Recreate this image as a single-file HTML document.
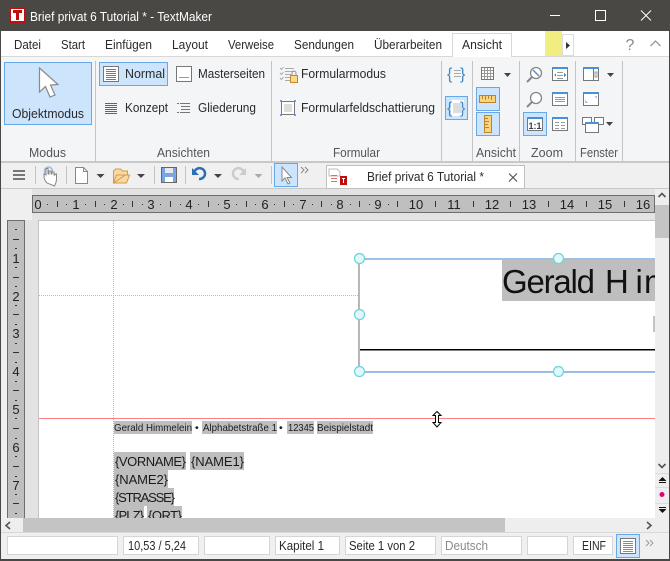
<!DOCTYPE html>
<html><head><meta charset="utf-8"><title>TextMaker</title>
<style>
html,body{margin:0;padding:0;background:#f0f0f0;width:670px;height:561px;overflow:hidden}
svg{display:block}
text{font-family:"Liberation Sans",sans-serif;font-size:13px;fill:#2a2a2a}
.l{fill:#555}
.r{fill:#222;font-size:13px;text-anchor:middle}
.s{fill:#1a1a1a}
</style></head><body>
<svg width="670" height="561" viewBox="0 0 670 561" xmlns="http://www.w3.org/2000/svg" shape-rendering="crispEdges">
<defs><clipPath id="pg"><rect x="39" y="221" width="616" height="297"/></clipPath></defs>
<rect width="670" height="561" fill="#f0f0f0"/>
<!-- title bar -->
<rect width="670" height="31" fill="#4a4845"/>
<rect x="10" y="8" width="15" height="15" fill="#c00d0d"/>
<rect x="11" y="9" width="13" height="12" fill="#fff"/>
<path d="M13 10h9v3h-3v7h-3v-7h-3z" fill="#c00d0d"/>
<text x="30" y="21" style="fill:#fff" textLength="182" lengthAdjust="spacingAndGlyphs">Brief privat 6 Tutorial * - TextMaker</text>
<rect x="550" y="15" width="10" height="1" fill="#fff"/>
<rect x="595.500" y="10.500" width="10" height="10" fill="none" stroke="#fff"/>
<path d="M641 10.500l10 10M651 10.500l-10 10" stroke="#fff" fill="none" shape-rendering="auto"/>
<!-- menu row -->
<rect y="31" width="670" height="25" fill="#fff"/>
<rect y="56" width="670" height="1" fill="#d8d8d8"/>
<g>
<text x="14" y="49" textLength="27" lengthAdjust="spacingAndGlyphs">Datei</text>
<text x="61" y="49" textLength="24" lengthAdjust="spacingAndGlyphs">Start</text>
<text x="105" y="49" textLength="47" lengthAdjust="spacingAndGlyphs">Einfügen</text>
<text x="172" y="49" textLength="36" lengthAdjust="spacingAndGlyphs">Layout</text>
<text x="228" y="49" textLength="46" lengthAdjust="spacingAndGlyphs">Verweise</text>
<text x="294" y="49" textLength="60" lengthAdjust="spacingAndGlyphs">Sendungen</text>
<text x="374" y="49" textLength="68" lengthAdjust="spacingAndGlyphs">Überarbeiten</text>
</g>
<path d="M452.500 57V33.500H511.500V57" fill="#fff" stroke="#d8d8d8"/>
<rect x="453" y="34" width="58" height="23" fill="#fff"/>
<text x="462" y="49" textLength="40" lengthAdjust="spacingAndGlyphs">Ansicht</text>
<rect x="545" y="31" width="17" height="25" fill="#f0ee80"/>
<rect x="562.500" y="34.500" width="11" height="21" fill="#fff" stroke="#ddd"/>
<path d="M566 42l4 3.500-4 3.500z" fill="#333" shape-rendering="auto"/>
<text x="630" y="50" style="fill:#888;font-size:16px" text-anchor="middle">?</text>
<path d="M650.500 46l5-5 5 5" fill="none" stroke="#999" stroke-width="1.300" shape-rendering="auto"/>
<!-- ribbon -->
<rect y="57" width="670" height="104" fill="#f3f5f7"/>
<rect y="161" width="670" height="2" fill="#c8c8c8"/>
<g fill="#c4c4c4">
<rect x="95" y="61" width="1" height="100"/><rect x="271" y="61" width="1" height="100"/>
<rect x="441" y="61" width="1" height="100"/><rect x="472" y="61" width="1" height="100"/>
<rect x="519" y="61" width="1" height="100"/><rect x="575" y="61" width="1" height="100"/>
<rect x="622" y="61" width="1" height="100"/>
</g>
<!-- selected backgrounds -->
<g fill="#cce4fc" stroke="#66a8e8">
<rect x="4.500" y="62.500" width="87" height="62"/>
<rect x="99.500" y="62.500" width="68" height="23"/>
<rect x="445.500" y="96.500" width="22" height="23"/>
<rect x="476.500" y="87.500" width="23" height="23"/>
<rect x="476.500" y="112.500" width="23" height="23"/>
<rect x="523.500" y="112.500" width="23" height="23"/>
</g>
<!-- objektmodus pointer -->
<path d="M39.500 68v24l6-5.500 4.500 10.500 5-2-4.500-10 7.500-.5z" fill="#fff" stroke="#8a8a8a" stroke-width="1.200" shape-rendering="auto"/>
<text x="12" y="118" textLength="72" lengthAdjust="spacingAndGlyphs">Objektmodus</text>
<!-- normal icon -->
<rect x="103.500" y="66.500" width="15" height="15" fill="#fff" stroke="#777"/>
<path d="M106 69.500h10M106 71.500h10M106 73.500h10M106 75.500h10M106 77.500h10M106 79.500h10" stroke="#777"/>
<text x="125" y="78" textLength="40" lengthAdjust="spacingAndGlyphs">Normal</text>
<rect x="176.500" y="66.500" width="15" height="15" fill="#fff" stroke="#777"/>
<rect x="179" y="77" width="10" height="1" fill="#999"/>
<text x="198" y="78" textLength="67" lengthAdjust="spacingAndGlyphs">Masterseiten</text>
<path d="M105 103.500h12M105 105.500h12M105 107.500h12M105 109.500h12M105 111.500h12M105 113.500h12" stroke="#666"/>
<text x="125" y="112" textLength="43" lengthAdjust="spacingAndGlyphs">Konzept</text>
<path d="M177 103.500h13M181 106.500h9M181 109.500h9M177 112.500h13" stroke="#777"/>
<path d="M177 106.500h2M177 109.500h2M179 103.500h1M179 112.500h1" stroke="#f3f5f7"/>
<text x="198" y="112" textLength="58" lengthAdjust="spacingAndGlyphs">Gliederung</text>
<!-- Formular icons -->
<path d="M285 68.500h9M285 71.500h9M285 74.500h6M285 77.500h5M285 80.500h5" stroke="#aaa"/>
<path d="M280 68l1.500 1.500 2-2.500M280 73l1.500 1.500 2-2.500M280 78l1.500 1.500 2-2.500" stroke="#aaa" fill="none" shape-rendering="auto"/>
<rect x="290.500" y="75.500" width="7" height="7" fill="#fbd98a" stroke="#c48a2a"/>
<path d="M292 75v-2a2 2 0 0 1 4 0v2" fill="none" stroke="#a88"  shape-rendering="auto"/>
<text x="301" y="78" textLength="85" lengthAdjust="spacingAndGlyphs">Formularmodus</text>
<rect x="281.500" y="101.500" width="13" height="13" fill="#fff" stroke="#777"/>
<rect x="284" y="104" width="8" height="8" fill="#ddd"/>
<g fill="#6a9be8"><rect x="280" y="100" width="2" height="2"/><rect x="294" y="100" width="2" height="2"/><rect x="280" y="114" width="2" height="2"/><rect x="294" y="114" width="2" height="2"/></g>
<text x="301" y="112" textLength="134" lengthAdjust="spacingAndGlyphs">Formularfeldschattierung</text>
<!-- field brace icons -->
<text x="447" y="79" style="fill:#3c87c8;font-size:16px">{</text>
<text x="460" y="79" style="fill:#3c87c8;font-size:16px">}</text>
<path d="M454 70.500h7M454 73.500h7M454 76.500h7" stroke="#aaa"/>
<rect x="451" y="100" width="13" height="16" fill="#fff"/>
<rect x="453" y="103" width="9" height="10" fill="#ddd"/>
<text x="447" y="113" style="fill:#3c87c8;font-size:16px">{</text>
<text x="460" y="113" style="fill:#3c87c8;font-size:16px">}</text>
<!-- grid -->
<rect x="481.500" y="67.500" width="12" height="12" fill="#fff" stroke="#777"/>
<path d="M484.500 68v11M487.500 68v11M490.500 68v11M482 70.500h11M482 73.500h11M482 76.500h11" stroke="#999"/>
<path d="M504 73h7l-3.500 4z" fill="#444" shape-rendering="auto"/>
<!-- rulers -->
<rect x="479.500" y="95.500" width="16" height="7" fill="#f9d67e" stroke="#b8842e"/>
<path d="M482.500 99v-3M485.500 100v-4M488.500 99v-3M491.500 100v-4" stroke="#b8842e"/>
<rect x="484.500" y="115.500" width="7" height="17" fill="#f9d67e" stroke="#b8842e"/>
<path d="M485 118.500h3M485 121.500h4M485 124.500h3M485 127.500h4" stroke="#b8842e"/>
<!-- zoom magnifiers -->
<g shape-rendering="auto">
<circle cx="536" cy="73" r="5.500" fill="#fff" stroke="#888" stroke-width="1.300"/>
<path d="M532 77l-5 5" stroke="#888" stroke-width="2"/>
<path d="M533 70l6 6" stroke="#5b8fd0" stroke-width="1.500"/>
<circle cx="536" cy="98" r="5.500" fill="#fff" stroke="#888" stroke-width="1.300"/>
<path d="M532 102l-5 5" stroke="#888" stroke-width="2"/>
</g>
<!-- window icons -->
<g fill="#fff" stroke="#777">
<rect x="552.500" y="67.500" width="15" height="13"/>
<rect x="552.500" y="92.500" width="15" height="13"/>
<rect x="527.500" y="117.500" width="15" height="13"/>
<rect x="552.500" y="117.500" width="15" height="13"/>
<rect x="583.500" y="67.500" width="15" height="13"/>
<rect x="583.500" y="92.500" width="15" height="13"/>
</g>
<g fill="#4a90d9">
<rect x="552" y="67" width="16" height="2"/><rect x="552" y="92" width="16" height="2"/>
<rect x="527" y="117" width="16" height="2"/><rect x="552" y="117" width="16" height="2"/>
<rect x="583" y="67" width="16" height="2"/><rect x="583" y="92" width="16" height="2"/>
</g>
<path d="M557 72.500h6M557 75.500h6M557 78.500h6M555 97.500h10M555 99.500h10M555 101.500h10M555 122.500h4M561 122.500h4M555 125.500h4M561 125.500h4M555 128.500h4M561 128.500h4" stroke="#999"/>
<path d="M554 75l2 -2v4zM566 75l-2 -2v4z" fill="#3a8ac8"/>
<text x="535" y="129" text-anchor="middle" style="font-size:9px;font-weight:bold;fill:#345">1:1</text>
<path d="M593.500 69v11" stroke="#777"/><rect x="595" y="72" width="2" height="5" fill="none" stroke="#999"/>
<path d="M585 103v-3l3 3zM597 96v3l-3-3z" fill="#a8c0f0"/>
<path d="M607 73h7l-3.500 4z" fill="#444" shape-rendering="auto"/>
<g fill="#fff" stroke="#777"><rect x="582.500" y="117.500" width="9" height="7"/><rect x="594.500" y="117.500" width="9" height="7"/><rect x="585.500" y="122.500" width="13" height="10"/></g>
<rect x="585" y="122" width="14" height="2" fill="#4a90d9"/>
<path d="M606 122h7l-3.500 4z" fill="#444" shape-rendering="auto"/>
<!-- group labels -->
<text class="l" x="29" y="157" textLength="37" lengthAdjust="spacingAndGlyphs">Modus</text>
<text class="l" x="157" y="157" textLength="53" lengthAdjust="spacingAndGlyphs">Ansichten</text>
<text class="l" x="333" y="157" textLength="47" lengthAdjust="spacingAndGlyphs">Formular</text>
<text class="l" x="476" y="157" textLength="40" lengthAdjust="spacingAndGlyphs">Ansicht</text>
<text class="l" x="531" y="157" textLength="32" lengthAdjust="spacingAndGlyphs">Zoom</text>
<text class="l" x="580" y="157" textLength="38" lengthAdjust="spacingAndGlyphs">Fenster</text>
<!-- toolbar -->
<rect y="163" width="670" height="25" fill="#f0f0f0"/>
<rect y="188" width="670" height="1" fill="#c8c8c8"/>
<g fill="#c4c4c4"><rect x="35" y="166" width="1" height="18"/><rect x="66" y="166" width="1" height="18"/><rect x="154" y="166" width="1" height="18"/><rect x="185" y="166" width="1" height="18"/><rect x="271" y="166" width="1" height="18"/></g>
<g fill="#777"><rect x="13" y="170" width="12" height="2"/><rect x="13" y="174" width="12" height="2"/><rect x="13" y="178" width="12" height="2"/></g>
<!-- hand -->
<g shape-rendering="auto">
<circle cx="48.500" cy="171" r="4" fill="none" stroke="#9fb8e8" stroke-width="1.500"/>
<path d="M47 183c-2-2-3-4-3-7v-2l2 1v-6.500h2V174h1v-3h2v3h1v-2h2v3h1v-1h1.500v5c0 3-1 5-2 7z" fill="#fff" stroke="#888"/>
<path d="M75.500 167.500h8l4 4v12h-12z" fill="#fff" stroke="#888"/>
<path d="M83.500 167.500v4h4" fill="none" stroke="#888"/>
<path d="M96.500 174h8l-4 4zM137 174h8l-4 4zM214 174h8l-4 4z" fill="#444"/>
<path d="M254.500 174h8l-4 4z" fill="#aaa"/>
<path d="M113.500 183v-12l2-2h5l2 2h5v4h-2l-12 8zM113.500 183l3-8h13l-3 8z" fill="#fad9a0" stroke="#d49a4a"/>
<path d="M199 179a5.500 5.500 0 0 0 6-6 5.500 5.500 0 0 0-9-3.500l-3 3" fill="none" stroke="#2e6fb4" stroke-width="2.500"/>
<path d="M192 168v7h7z" fill="#2e6fb4"/>
<path d="M239 179a5.500 5.500 0 0 1-6-6 5.500 5.500 0 0 1 9-3.500l3 3" fill="none" stroke="#ccc" stroke-width="2.500"/>
<path d="M246 168v7h-7z" fill="#ccc"/>
</g>
<rect x="161.500" y="167.500" width="15" height="15" fill="#7aa4e8" stroke="#666"/>
<rect x="165" y="168" width="8" height="5" fill="#e8e8e8"/>
<rect x="165" y="177" width="8" height="5" fill="#fff"/>
<rect x="274.500" y="163.500" width="23" height="23" fill="#cce4fc" stroke="#66a8e8"/>
<path d="M282 167v14l3-3 3 6 2-1-3-5.500h4.500z" fill="#fff" stroke="#888" shape-rendering="auto"/>
<path d="M301 167l3 3-3 3M305 167l3 3-3 3" fill="none" stroke="#888" shape-rendering="auto"/>
<!-- doc tab -->
<rect x="326.500" y="165.500" width="198" height="23" fill="#fff" stroke="#c0c0c0"/>
<path d="M329 169h8l3 3v4h-11z" fill="#fff" stroke="#bbb"/>
<path d="M331 175.500h6M331 178.500h6M331 181.500h6" stroke="#e66"/>
<rect x="340" y="176" width="7" height="9" fill="#c00d0d"/>
<rect x="342" y="178" width="3" height="1" fill="#fff"/><rect x="343" y="178" width="1" height="5" fill="#fff"/>
<text x="367" y="181" textLength="117" lengthAdjust="spacingAndGlyphs">Brief privat 6 Tutorial *</text>
<path d="M509 173.500l8 8M517 173.500l-8 8" stroke="#555" stroke-width="1.200" fill="none" shape-rendering="auto"/>
<!-- doc area -->
<rect y="189" width="655" height="329" fill="#e3e3e3"/>
<rect x="0" y="189" width="32" height="31" fill="#efefef"/>
<rect x="0" y="220" width="7" height="298" fill="#efefef"/>
<rect x="32.500" y="195.500" width="622" height="17" fill="#bfbfbf" stroke="#6d6d6d"/>
<rect x="38" y="220" width="617" height="298" fill="#c4c4c4"/>
<rect x="39" y="221" width="616" height="297" fill="#fff"/>
<!-- ruler numbers -->
<g>
<text class="r" x="38" y="209">0</text><text class="r" x="76" y="209">1</text><text class="r" x="114" y="209">2</text><text class="r" x="151" y="209">3</text><text class="r" x="189" y="209">4</text><text class="r" x="227" y="209">5</text><text class="r" x="265" y="209">6</text><text class="r" x="303" y="209">7</text><text class="r" x="340" y="209">8</text><text class="r" x="378" y="209">9</text><text class="r" x="416" y="209">10</text><text class="r" x="454" y="209">11</text><text class="r" x="492" y="209">12</text><text class="r" x="529" y="209">13</text><text class="r" x="567" y="209">14</text><text class="r" x="605" y="209">15</text><text class="r" x="643" y="209">16</text>
</g>
<!-- ruler ticks -->
<g fill="#333">
<rect x="47" y="204" width="1" height="1"/><rect x="57" y="201" width="1" height="6"/><rect x="66" y="204" width="1" height="1"/>
<rect x="85" y="204" width="1" height="1"/><rect x="95" y="201" width="1" height="6"/><rect x="104" y="204" width="1" height="1"/>
<rect x="123" y="204" width="1" height="1"/><rect x="132" y="201" width="1" height="6"/><rect x="142" y="204" width="1" height="1"/>
<rect x="160" y="204" width="1" height="1"/><rect x="170" y="201" width="1" height="6"/><rect x="180" y="204" width="1" height="1"/>
<rect x="198" y="204" width="1" height="1"/><rect x="208" y="201" width="1" height="6"/><rect x="218" y="204" width="1" height="1"/>
<rect x="236" y="204" width="1" height="1"/><rect x="246" y="201" width="1" height="6"/><rect x="255" y="204" width="1" height="1"/>
<rect x="274" y="204" width="1" height="1"/><rect x="284" y="201" width="1" height="6"/><rect x="293" y="204" width="1" height="1"/>
<rect x="312" y="204" width="1" height="1"/><rect x="321" y="201" width="1" height="6"/><rect x="331" y="204" width="1" height="1"/>
<rect x="350" y="204" width="1" height="1"/><rect x="359" y="201" width="1" height="6"/><rect x="369" y="204" width="1" height="1"/>
<rect x="388" y="204" width="1" height="1"/><rect x="397" y="201" width="1" height="6"/>
<rect x="435" y="201" width="1" height="6"/><rect x="473" y="201" width="1" height="6"/><rect x="510" y="201" width="1" height="6"/><rect x="548" y="201" width="1" height="6"/><rect x="586" y="201" width="1" height="6"/><rect x="624" y="201" width="1" height="6"/>
</g>
<!-- vertical ruler -->
<rect x="7.500" y="220.500" width="17" height="298" fill="#bfbfbf" stroke="#6d6d6d"/>
<g>
<text class="r" x="16" y="263">1</text><text class="r" x="16" y="301">2</text><text class="r" x="16" y="338">3</text><text class="r" x="16" y="376">4</text><text class="r" x="16" y="414">5</text><text class="r" x="16" y="452">6</text><text class="r" x="16" y="490">7</text>
</g>
<g fill="#333">
<rect x="15" y="229" width="2" height="1"/><rect x="13" y="239" width="6" height="1"/><rect x="15" y="248" width="2" height="1"/>
<rect x="15" y="267" width="2" height="1"/><rect x="13" y="277" width="6" height="1"/><rect x="15" y="286" width="2" height="1"/>
<rect x="15" y="305" width="2" height="1"/><rect x="13" y="314" width="6" height="1"/><rect x="15" y="324" width="2" height="1"/>
<rect x="15" y="343" width="2" height="1"/><rect x="13" y="352" width="6" height="1"/><rect x="15" y="362" width="2" height="1"/>
<rect x="15" y="381" width="2" height="1"/><rect x="13" y="390" width="6" height="1"/><rect x="15" y="400" width="2" height="1"/>
<rect x="15" y="418" width="2" height="1"/><rect x="13" y="428" width="6" height="1"/><rect x="15" y="438" width="2" height="1"/>
<rect x="15" y="456" width="2" height="1"/><rect x="13" y="466" width="6" height="1"/><rect x="15" y="476" width="2" height="1"/>
<rect x="15" y="494" width="2" height="1"/><rect x="13" y="503" width="6" height="1"/><rect x="15" y="513" width="2" height="1"/>
</g>
<!-- page content -->
<g clip-path="url(#pg)">
<path d="M113.500 221V518" stroke="#bbb" stroke-dasharray="1 1"/>
<path d="M39 295.500H359" stroke="#bbb" stroke-dasharray="1 1"/>
<rect x="502" y="259" width="153" height="42" fill="#bebebe"/>
<text x="502" y="293" style="font-size:33px;fill:#111" textLength="93" lengthAdjust="spacing">Gerald</text>
<text x="605" y="293" style="font-size:33px;fill:#111">H</text>
<text x="635.500" y="293" style="font-size:33px;fill:#111">i</text>
<text x="644" y="293" style="font-size:33px;fill:#111">m</text>
<rect x="653" y="316" width="2" height="16" fill="#c4c4c4"/>
<rect x="360" y="349" width="295" height="1.500" fill="#000"/>
<rect x="359" y="258" width="296" height="2" fill="#9cc0e8"/>
<rect x="359" y="371" width="296" height="1" fill="#b4b4b4"/><rect x="359" y="372" width="296" height="1" fill="#9cc0e8"/>
<rect x="358" y="258" width="1" height="113" fill="#b4b4b4"/><rect x="359" y="258" width="1" height="113" fill="#9cc0e8"/>
<g fill="#dff8fb" stroke="#74d2d8" stroke-width="1.300" shape-rendering="auto">
<circle cx="359.500" cy="258.500" r="5"/><circle cx="558.500" cy="258.500" r="5"/><circle cx="359.500" cy="314.500" r="5"/><circle cx="359.500" cy="371.500" r="5"/><circle cx="558.500" cy="371.500" r="5"/>
</g>
<rect x="39" y="418" width="616" height="1" fill="#ff8080"/>
<g fill="#bebebe">
<rect x="114" y="421" width="78" height="13"/><rect x="202" y="421" width="75" height="13"/><rect x="287" y="421" width="27" height="13"/><rect x="317" y="421" width="56" height="13"/>
<rect x="114" y="452" width="72" height="18"/><rect x="190" y="452" width="54" height="18"/>
<rect x="114" y="470" width="54" height="18"/><rect x="114" y="488" width="60" height="18"/>
<rect x="114" y="506" width="30" height="18"/><rect x="147" y="506" width="35" height="18"/>
</g>
<text class="s" x="114" y="431" style="font-size:10.500px" textLength="78" lengthAdjust="spacingAndGlyphs">Gerald Himmelein</text>
<text class="s" x="195" y="431" style="font-size:10.500px">•</text>
<text class="s" x="203" y="431" style="font-size:10.500px" textLength="74" lengthAdjust="spacingAndGlyphs">Alphabetstraße 1</text>
<text class="s" x="279" y="431" style="font-size:10.500px">•</text>
<text class="s" x="288" y="431" style="font-size:10.500px" textLength="26" lengthAdjust="spacingAndGlyphs">12345</text>
<text class="s" x="317" y="431" style="font-size:10.500px" textLength="56" lengthAdjust="spacingAndGlyphs">Beispielstadt</text>
<text class="s" x="115" y="466" style="font-size:13px" textLength="71" lengthAdjust="spacing">{VORNAME}</text>
<text class="s" x="191" y="466" style="font-size:13px" textLength="53" lengthAdjust="spacing">{NAME1}</text>
<text class="s" x="115" y="484" style="font-size:13px" textLength="53" lengthAdjust="spacing">{NAME2}</text>
<text class="s" x="115" y="502" style="font-size:13px" textLength="60" lengthAdjust="spacing">{STRASSE}</text>
<text class="s" x="115" y="520" style="font-size:13px" textLength="29" lengthAdjust="spacing">{PLZ}</text>
<text class="s" x="148" y="520" style="font-size:13px" textLength="34" lengthAdjust="spacing">{ORT}</text>
</g>
<!-- resize cursor -->
<path d="M437 411.500l4 4h-2.500v7H441l-4 4.500-4-4.500h2.500v-7H433z" fill="#fff" stroke="#000" shape-rendering="auto"/>
<!-- vertical scrollbar -->
<rect x="655" y="189" width="15" height="329" fill="#eeeeee"/>
<rect x="655" y="205" width="15" height="33" fill="#c4c4c4"/>
<path d="M658.500 197l3.500-3.500 3.500 3.500" fill="none" stroke="#555" stroke-width="1.600" shape-rendering="auto"/>
<path d="M658.500 464l3.500 3.500 3.500-3.500" fill="none" stroke="#555" stroke-width="1.600" shape-rendering="auto"/>
<g fill="#dcdcdc"><rect x="655" y="473" width="15" height="1"/><rect x="655" y="487" width="15" height="1"/><rect x="655" y="503" width="15" height="1"/></g>
<path d="M662.500 477l4 4h-8z" fill="#111" shape-rendering="auto"/>
<rect x="659" y="482" width="7" height="1" fill="#111"/>
<circle cx="662" cy="494.500" r="2.500" fill="#e0007a" shape-rendering="auto"/>
<rect x="659" y="507" width="7" height="1" fill="#111"/>
<path d="M658.500 509h8l-4 4z" fill="#111" shape-rendering="auto"/>
<!-- horizontal scrollbar -->
<rect x="0" y="518" width="670" height="14" fill="#eeeeee"/>
<rect x="23" y="518" width="482" height="14" fill="#c4c4c4"/>
<path d="M10 522l-4 3.500 4 3.500" fill="none" stroke="#555" stroke-width="1.600" shape-rendering="auto"/>
<path d="M647 522l4 3.500-4 3.500" fill="none" stroke="#555" stroke-width="1.600" shape-rendering="auto"/>
<!-- status bar -->
<rect x="0" y="532" width="670" height="26" fill="#f0f0f0"/>
<rect x="0" y="532" width="670" height="1" fill="#d8d8d8"/>
<g fill="#fff" stroke="#d5d5d5">
<rect x="7.500" y="536.500" width="110" height="18"/>
<rect x="123.500" y="536.500" width="75" height="18"/>
<rect x="204.500" y="536.500" width="65" height="18"/>
<rect x="275.500" y="536.500" width="64" height="18"/>
<rect x="345.500" y="536.500" width="90" height="18"/>
<rect x="441.500" y="536.500" width="80" height="18"/>
<rect x="527.500" y="536.500" width="40" height="18"/>
<rect x="573.500" y="536.500" width="39" height="18"/>
</g>
<text x="128" y="550" textLength="58" lengthAdjust="spacingAndGlyphs">10,53 / 5,24</text>
<text x="279" y="550" textLength="45" lengthAdjust="spacingAndGlyphs">Kapitel 1</text>
<text x="349" y="550" textLength="66" lengthAdjust="spacingAndGlyphs">Seite 1 von 2</text>
<text x="445" y="550" style="fill:#8a8a8a" textLength="43" lengthAdjust="spacingAndGlyphs">Deutsch</text>
<text x="582" y="550" textLength="24" lengthAdjust="spacingAndGlyphs">EINF</text>
<rect x="616.500" y="534.500" width="23" height="23" fill="#cce4fc" stroke="#66a8e8"/>
<rect x="620.500" y="538.500" width="15" height="15" fill="#fff" stroke="#777"/>
<path d="M623 541.500h10M623 543.500h10M623 545.500h10M623 547.500h10M623 549.500h10M623 551.500h10" stroke="#888"/>
<path d="M646 540l3 3-3 3M650 540l3 3-3 3" fill="none" stroke="#999" shape-rendering="auto"/>
<!-- window frame -->
<rect x="0" y="31" width="1" height="530" fill="#4a4845"/>
<rect x="669" y="31" width="1" height="530" fill="#4a4845"/>
<rect x="0" y="559" width="670" height="2" fill="#4a4845"/>
</svg>
</body></html>
